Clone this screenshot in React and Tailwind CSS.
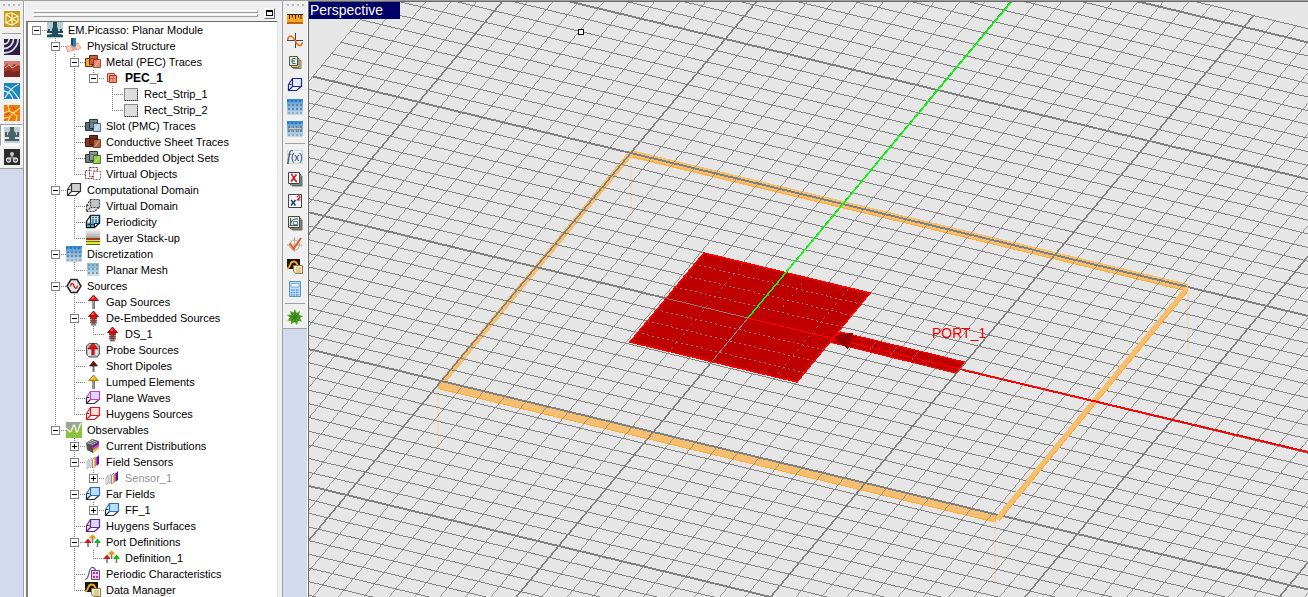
import { useState } from "react";

/* ---------- icons ---------- */

function Svg({ size = 16, children, crisp = false }) {
  return (
    <svg
      width={size}
      height={size}
      viewBox="0 0 16 16"
      className="block shrink-0"
      shapeRendering={crisp ? "crispEdges" : "auto"}
      fill="none"
      aria-hidden="true"
    >
      {children}
    </svg>
  );
}

const Cube = ({ front, back = front, fill = "#d8dcf0", dash, faces = "#fff" }) => (
  <Svg>
    <path d="M5.5 1.5 1.5 7.5V13.5H9.5L14.5 9V1.5Z" fill={faces} />
    <path d="M1.5 7.5V13.5H9.5L14 9.5M1.5 13.5 5.5 9.5M1.5 7.5H4.5" stroke={back} strokeWidth="1.2" strokeDasharray={dash} />
    <path d="M5.5 1.5H14.5V9.5H5.5Z" stroke={front} strokeWidth="1.2" fill={fill} strokeDasharray={dash} />
    <path d="M1.5 7.5 5.5 1.5" stroke={front} strokeWidth="1.2" strokeDasharray={dash} />
  </Svg>
);

const PeriodicCube = () => (
  <Svg>
    <path d="M5.5 1.5 1.5 7.5V13.5H9.5L14.5 9V1.5Z" fill="#fff" stroke="#111" strokeWidth="1.3" />
    <path d="M5.5 1.5H14.5V9.5H5.5Z" fill="#cfe4f0" stroke="#1c2a33" strokeWidth="1.2" />
    <path d="M7 3.5H14M7 6H14M7 8H14" stroke="#2c7cab" strokeWidth="1.5" strokeDasharray="2 1" />
    <path d="M2 8.5H9V13H2Z" fill="#5e9cc0" />
    <path d="M2.5 10.5H9M5.5 8V13" stroke="#14394e" />
    <path d="M9.5 13.5V9.5" stroke="#111" />
  </Svg>
);

const Stack = ({ a, b, c, line = "#333", dash }) => (
  <Svg>
    <path d="M.5 4.5H7.5V12.5H.5Z" fill={a} stroke={line} strokeDasharray={dash} />
    <path d="M4.5 1.5H12.5V10.5H4.5Z" fill={b} stroke={line} strokeDasharray={dash} />
    <path d="M5 4.5H12" stroke={line} opacity=".4" strokeDasharray={dash} />
    <path d="M8.5 5.5H15.5V13.5H8.5Z" fill={c} stroke={line} strokeOpacity=".7" strokeDasharray={dash} />
    <path d="M10 12.5 14.5 6.5" stroke="#fff" opacity=".5" />
  </Svg>
);

const Arrow = ({ head, edge, stem = "#777", bands }) => (
  <Svg>
    <path d="M7 6H10V15H7Z" fill={stem} />
    <path d="M8 6V15" stroke="#bbb" />
    <path d="M8.5 1 13.5 6.5H3.5Z" fill={head} stroke={edge} strokeWidth=".8" />
    <path d="M8.5 2 6 5H9Z" fill="#fff" opacity=".35" />
    {bands && (
      <>
        <path d="M5.5 6H11.5V9H5.5Z" fill={head} stroke={edge} strokeWidth=".6" />
        <path d="M5 10.2H12M5 12.8H12" stroke="#333" strokeWidth="1.1" />
        <path d="M5.5 11.5H11.5" stroke="#d33" strokeWidth="1.2" />
        <path d="M6 13.5H11V15.5H6Z" fill="#777" />
      </>
    )}
  </Svg>
);

const Picasso = () => (
  <Svg>
    <path d="M0 0H16V16H0Z" fill="#b9cdd1" />
    <path d="M6 0H10V5L11 7V9H13V7H15V9H16V11H11V12L16 13V15H0V13L5 12V11H0V9H1V7H3V9H5V7L6 5Z" fill="#1f4e5a" />
    <path d="M0 11.5H5M11 11.5H16" stroke="#fff" />
  </Svg>
);
const PicassoGray = () => (
  <Svg>
    <path d="M0 0H16V16H0Z" fill="#c3d0d0" />
    <path d="M6 0H10V4L12 6V8H13V5H15V10H11V12H15V14H1V12H5V10H1V5H3V8H4V6L6 4Z" fill="#48636a" />
    <path d="M0 11H5M11 11H16" stroke="#fff" />
  </Svg>
);
const Physical = () => (
  <Svg>
    <path d="M0 8 8 7 12 4 15 10 11 12 1 14Z" fill="#eba390" />
    <path d="M0 8 2 14 7 12 5 8ZM9 8 11 12 15 10 12 5Z" fill="#f8cfc2" stroke="#d88474" strokeWidth=".5" />
    <path d="M5 0H10V8L8 9 5 7Z" fill="#2f7fae" />
    <path d="M5 0H7V8L5 7Z" fill="#1f4960" />
  </Svg>
);
const Pec = () => (
  <Svg>
    <path d="M3.5 3.5H10.5V11.5H3.5Z" fill="#f6b49a" stroke="#c0452c" />
    <path d="M5.5 5.5H12.5V12.5H5.5Z" fill="#ee9a80" stroke="#b02a20" />
    <path d="M6 8.5H11M9 5V12" stroke="#c84634" opacity=".6" />
  </Svg>
);
const Swatch = () => (
  <Svg crisp>
    <path d="M1.5 2.5H14.5V14.5H1.5Z" fill="#dedede" stroke="#888" />
    <path d="M2 14.5H14.5V3" stroke="#333" strokeDasharray="1 1" />
  </Svg>
);
const Layers = () => (
  <Svg crisp>
    <defs>
      <linearGradient id="air" x2="0" y2="1">
        <stop stopColor="#f2f2f2" />
        <stop offset="1" stopColor="#a4a4a4" />
      </linearGradient>
    </defs>
    <path d="M1 0H15V8H1Z" fill="url(#air)" />
    <path d="M1 8H15V10H1Z" fill="#a43a22" />
    <path d="M1 10H15V15H1Z" fill="#f0e434" />
    <path d="M1 11.5H15M1 14.5H15" stroke="#4c6a1c" />
  </Svg>
);
const Mesh = ({ bar }) => (
  <Svg crisp>
    <defs>
      <linearGradient id="mesh" x2="0" y2="1">
        <stop stopColor="#2f86d0" />
        <stop offset=".25" stopColor="#68aae2" />
        <stop offset="1" stopColor="#c6dcee" />
      </linearGradient>
    </defs>
    <path d="M0 0H16V16H0Z" fill="url(#mesh)" />
    <path d="M0 2H16" stroke="#2060a0" strokeWidth="2" strokeDasharray="2 2" opacity=".6" />
    <path d="M1 6H16M1 10H16" stroke="#6a8092" strokeWidth="2" strokeDasharray="2 2" />
    <path d="M1 14H16" stroke="#a0a8b0" strokeWidth="2" strokeDasharray="2 2" />
    {bar && (
      <>
        <path d="M1 8H15M5 5V11M11 5V11" stroke="#8f979e" strokeWidth="2" />
        <path d="M2 7.5H14" stroke="#c4cace" />
      </>
    )}
  </Svg>
);
const MeshSmall = () => (
  <Svg crisp>
    <path d="M2 1H14V6H2Z" fill="#8bbcde" />
    <path d="M2 6H14V10H2Z" fill="#a9cde6" />
    <path d="M2 10H14V14H2Z" fill="#c9dde9" />
    <path d="M3 3H14M3 7H14M3 11H14" stroke="#8296a6" strokeWidth="2" strokeDasharray="2 2" />
  </Svg>
);
const SourceHex = () => (
  <Svg>
    <path d="M5 1.5H11L15 8 11 14.5H5L1 8Z" fill="#e6e6e6" stroke="#222" strokeWidth="1.5" />
    <path d="M4.5 8.5C5 4.5 7 4.5 8 8S11 11 11.5 7.5" stroke="#c01515" strokeWidth="1.3" />
  </Svg>
);
const Probe = () => (
  <Svg>
    <path d="M1.5 4 4 1.5H12L14.5 4V12L12 15H4L1.5 12Z" fill="#b8b8b8" stroke="#555" />
    <path d="M3 7H6V14H3ZM10.5 7H13V13H10.5Z" fill="#e4e4e4" />
    <path d="M8 1 13 7H3Z" fill="#e01818" stroke="#7a0000" strokeWidth=".6" />
    <path d="M6.5 7H9.5V13H6.5Z" fill="#c41414" />
  </Svg>
);
const Dipole = () => (
  <Svg>
    <path d="M7.5 8H9.5V14H7.5Z" fill="#777" />
    <path d="M8.5 3 12.5 8H4.5Z" fill="#6d1414" stroke="#300" strokeWidth=".6" />
  </Svg>
);
const Observ = () => (
  <Svg>
    <path d="M0 0H16V16H0Z" fill="#9aa596" />
    <path d="M0 16V8L4 11 7 5 11 10 16 2V16Z" fill="#86c440" />
    <path d="M0 6 4 10C6 10 6.500 3 8 3S9.500 10 11 10 13 2 15.500 1" stroke="#f6f4d0" strokeWidth="1.5" />
  </Svg>
);
const Currents = () => (
  <Svg>
    <path d="M1 5 7 1 14 3V10L8 15 2 12Z" fill="#555" />
    <path d="M2 5 7 1.5 13.5 3.5 8 7Z" fill="#d0d0d0" />
    <path d="M3.5 4 9 6M5.5 3 11 5M8 2 13 4" stroke="#333" strokeWidth=".8" />
    <path d="M8 7 14 3.5V7L8 11Z" fill="#5b22c8" />
    <path d="M8 9.5 14 6V8.5L8 13Z" fill="#e2438c" />
    <path d="M8 12 14 8.5V10L8 15Z" fill="#f7c22b" />
  </Svg>
);
const Sensors = () => (
  <Svg>
    <path d="M2 8 4 5V13L2 15ZM5 6.5 7 4V12L5 14Z" fill="#f4f4f4" stroke="#aaa" strokeWidth=".8" />
    <path d="M7.5 5.5 10 3V12L7.5 14Z" fill="#fff" stroke="#777" strokeWidth=".8" />
    <path d="M9 5 11 3V12L9 14Z" fill="#f5b43a" />
    <path d="M10.5 4 12 2.5V11L10.5 12.5Z" fill="#e0407c" />
    <path d="M12 3 14 1V10L12 11.5Z" fill="#3a18d8" />
  </Svg>
);
const Ports = () => (
  <Svg>
    <path d="M3 8V13M12.5 8V13" stroke="#777" strokeWidth="1.6" />
    <path d="M7.5 4V9" stroke="#777" strokeWidth="1.6" />
    <path d="M3 4.500 6 8V9H0V8Z" fill="#dc1414" />
    <path d="M7.5 0.500 10.500 3V4.500H4.500V3Z" fill="#e29a10" />
    <path d="M12.5 4.500 15.500 8V9H9.500V8Z" fill="#15b81c" />
  </Svg>
);
const Periodic = () => (
  <Svg>
    <path d="M0 13.500C5 12.500 3 2.500 7 1.500 10 1 10.500 4 11 6" stroke="#6a4aa8" strokeWidth="1.2" />
    <path d="M6.500 4.500H14.500V13.500H6.500Z" fill="#f3c8ee" stroke="#555" />
    <path d="M8 6H10V8H8ZM11 6H13V8H11ZM8 10H10V12H8ZM11 10H13V12H11Z" fill="#c424c0" />
  </Svg>
);
const DataMgr = () => (
  <Svg>
    <path d="M0 0H13V10H0Z" fill="#141414" />
    <path d="M0 9.500C4 9 2 2.500 6.500 2.500S9 6 12 8" stroke="#f6a81c" strokeWidth="1.8" />
    <path d="M6.500 6.500H15.500V14.500H8.500L6.500 12Z" fill="#f5e8bd" stroke="#8a7850" />
    <path d="M9 9H14M9 11H14M9 13H14" stroke="#b89d62" strokeWidth=".8" />
  </Svg>
);

/* toolbar icons */
const Ruler = () => (
  <Svg>
    <path d="M0 3H16V13H0Z" fill="#f7a62a" />
    <path d="M0 3.500H16" stroke="#3c2408" />
    <path d="M0 12H16" stroke="#b8680c" strokeWidth="2" />
    <path d="M2.500 4V8M5.500 4V6.500M8.500 4V8M11.500 4V6.500M14 4V8" stroke="#4a2703" />
  </Svg>
);
const Sine = () => (
  <Svg>
    <path d="M0 7.500H16M8.500 0V15" stroke="#444" />
    <path d="M.5 7C1.500 2 4.500 1 8 7.500S14.500 14 15.500 9" stroke="#f26a1b" strokeWidth="1.6" />
  </Svg>
);
const Sheets = ({ children, fill = "#fff" }) => (
  <Svg>
    <path d="M5 5H15.500V15.500H5Z" fill="#707070" />
    <path d="M3.500 3.500H14V14H3.500Z" fill="#aaa" stroke="#666" />
    <path d="M1.500 1.500H12.500V12.500H1.500Z" fill={fill} stroke="#444" />
    {children}
  </Svg>
);
const Eps = () => (
  <Svg>
    <path d="M6.5 5.5H14V13.5H6.5Z" fill="#e8cc7c" stroke="#777" />
    <path d="M4.5 3.5H12V12.5H4.5Z" fill="#d8cb84" stroke="#666" />
    <path d="M2.5 1.5H10.500V10.5H2.5Z" fill="#e6f0c4" stroke="#555" />
    <path d="M8.5 3.5H6Q4.500 4 5 6H8M5 6Q4.500 8 6 8.500H8.5" stroke="#285a8c" />
  </Svg>
);
const Fx = () => (
  <Svg>
    <path d="M.5 1.5H15.5V14.5H.5Z" stroke="#bbb" fill="#eef4fa" strokeDasharray="1 1" />
    <text x="0" y="12" fontSize="14" fontStyle="italic" fontFamily="Liberation Serif, serif" fill="#16365c">f</text>
    <text x="4" y="12" fontSize="10" fontFamily="Liberation Sans, sans-serif" fill="#16365c">(x)</text>
  </Svg>
);
const Chi = () => (
  <Sheets>
    <path d="M4 3.5C6 3 7 10.5 10 10.5M9.5 3.5 4 10.5" stroke="#d51a1a" strokeWidth="1.8" />
  </Sheets>
);
const XSquared = () => (
  <Svg>
    <path d="M1.5 1.5H14.5V14.5H1.5Z" fill="#f7f7f7" stroke="#444" />
    <path d="M4 7 8.5 12.5M8.5 7 4 12.5" stroke="#1c3f68" strokeWidth="1.5" />
    <path d="M10 4Q12.5 1.5 13 4L10.5 7H13.5" stroke="#cc1818" strokeWidth="1.2" />
  </Svg>
);
const Plots = () => (
  <Sheets fill="#eef0c8">
    <path d="M3.5 3V11M2.5 10.5H11" stroke="#555" />
    <path d="M3.5 10C4 5 6 3.5 11 4" stroke="#2a6db4" strokeWidth="1.2" />
    <path d="M6.5 6.5H10.5V9.5H6.5Z" stroke="#4e87bd" fill="#fff" />
  </Sheets>
);
const Check = () => (
  <Svg>
    <circle cx="7.5" cy="8" r="5" stroke="#aaa" />
    <path d="M7.5 0V15M0 8H15" stroke="#aaa" />
    <path d="M3 6.500 6.500 12 14 1" stroke="#ef5a17" strokeWidth="2" />
  </Svg>
);
const Calc = () => (
  <Svg>
    <path d="M2.5.5H13.5V15.5H2.5Z" fill="#bcdcf8" stroke="#5e93cc" />
    <path d="M4 2.5H12V6H4Z" fill="#f0f8ff" stroke="#6c9cd0" strokeWidth=".8" />
    <path d="M4 9H12M4 11.5H12M4 14H12" stroke="#6098d4" strokeWidth="1.5" strokeDasharray="1.5 1" />
  </Svg>
);
const Spark = () => (
  <Svg>
    <path
      d="M8 0 9.5 4 13 2 12 6 16 7 13 9 15 12.5 11 12 10 16 7.5 13 4 15.5 4 12 .5 11.5 3 8.5 0 6 4 5.5 3 2 6.5 3.5Z"
      fill="#4ea026"
    />
    <path d="M8 3V13M3 8H13M4.5 4.5 11.5 11.5M11.5 4.5 4.5 11.5" stroke="#2c7a14" strokeWidth=".9" />
  </Svg>
);
const Cubecad = () => (
  <Svg>
    <path d="M0 0H16V16H0Z" fill="#c79a1c" />
    <path d="M2 3 8 2 14 5V11L8 14 2 12ZM8 2V14M2 3 8 8 2 12M14 5 8 8 14 11" stroke="#fdf3c4" strokeWidth="1.2" />
  </Svg>
);
const Rings = () => (
  <Svg>
    <path d="M0 0H16V16H0Z" fill="#2a2140" />
    <path d="M0 5A5 5 0 0 0 5 0M0 9.5A9.5 9.5 0 0 0 9.5 0M0 14A14 14 0 0 0 14 0" stroke="#ddd6ea" strokeWidth="1.8" />
  </Svg>
);
const Terrain = () => (
  <Svg>
    <path d="M0 0H16V16H0Z" fill="#a33a2e" />
    <path d="M0 0H16V5L10 3 7 6 3 3 0 6Z" fill="#d08070" />
    <path d="M1 7 5 4 8 7 13 4" stroke="#e8b8a8" />
    <path d="M0 11 5 9 10 11 16 9V16H0Z" fill="#7c2420" />
  </Svg>
);
const Beams = () => (
  <Svg>
    <path d="M0 0H16V16H0Z" fill="#1e86bd" />
    <path d="M1 3Q8 5 15 16M1 15Q6 5 15 1M0 8Q7 9 9 16" stroke="#d8f0fb" strokeWidth="1.3" />
  </Svg>
);
const Cracks = () => (
  <Svg>
    <path d="M0 0H16V16H0Z" fill="#ee7a0c" />
    <path d="M0 8 5 6 9 8 12 6 16 3M5 6 4 0M9 8 6 12 4 16M9 8 13 11 12 16M6 12 0 13" stroke="#ffe08a" strokeWidth="1.2" />
    <path d="M2 10 5 8M9 2 11 5" stroke="#b23908" />
  </Svg>
);
const Spheres = () => (
  <Svg>
    <path d="M0 0H16V16H0Z" fill="#2c2c2c" />
    <path d="M8 4V8L4 11M8 8 12 11" stroke="#888" strokeWidth="2" />
    <circle cx="8" cy="5" r="2" fill="#ccc" />
    <circle cx="4.5" cy="11" r="2" stroke="#ddd" strokeWidth="1.300" />
    <circle cx="11.5" cy="11" r="2" stroke="#ddd" strokeWidth="1.300" />
  </Svg>
);

/* ---------- tree ---------- */

const stackMetal = <Stack a="#f4a92c" b="#c9603e" c="#f2876e" line="#6e2313" />;

const TREE = {
  label: "EM.Picasso: Planar Module",
  icon: <Picasso />,
  children: [
    {
      label: "Physical Structure",
      icon: <Physical />,
      children: [
        {
          label: "Metal (PEC) Traces",
          icon: stackMetal,
          children: [
            {
              label: "PEC_1",
              icon: <Pec />,
              bold: true,
              children: [
                { label: "Rect_Strip_1", icon: <Swatch /> },
                { label: "Rect_Strip_2", icon: <Swatch /> },
              ],
            },
          ],
        },
        { label: "Slot (PMC) Traces", icon: <Stack a="#596b77" b="#6f8794" c="#b4d6ec" line="#26333c" /> },
        { label: "Conductive Sheet Traces", icon: <Stack a="#8a3a20" b="#742c17" c="#b26238" line="#3c170b" /> },
        { label: "Embedded Object Sets", icon: <Stack a="#75848c" b="#8b9a9e" c="#9bd23c" line="#2e3a2e" /> },
        { label: "Virtual Objects", icon: <Stack a="#fff" b="#fbeeee" c="#fff" line="#6b3434" dash="2 1" /> },
      ],
    },
    {
      label: "Computational Domain",
      icon: <Cube front="#333" fill="#cfcfcf" />,
      children: [
        { label: "Virtual Domain", icon: <Cube front="#444" fill="#c4c4c4" dash="2 1" faces="#ddd" /> },
        { label: "Periodicity", icon: <PeriodicCube /> },
        { label: "Layer Stack-up", icon: <Layers /> },
      ],
    },
    {
      label: "Discretization",
      icon: <Mesh />,
      children: [{ label: "Planar Mesh", icon: <MeshSmall /> }],
    },
    {
      label: "Sources",
      icon: <SourceHex />,
      children: [
        { label: "Gap Sources", icon: <Arrow head="#e01818" edge="#7a0000" /> },
        {
          label: "De-Embedded Sources",
          icon: <Arrow head="#e01818" edge="#7a0000" bands />,
          children: [{ label: "DS_1", icon: <Arrow head="#e01818" edge="#7a0000" bands /> }],
        },
        { label: "Probe Sources", icon: <Probe /> },
        { label: "Short Dipoles", icon: <Dipole /> },
        { label: "Lumped Elements", icon: <Arrow head="#f0b418" edge="#a06c00" /> },
        { label: "Plane Waves", icon: <Cube front="#d638c4" back="#3c2d4a" /> },
        { label: "Huygens Sources", icon: <Cube front="#dc1c1c" fill="#fbdede" /> },
      ],
    },
    {
      label: "Observables",
      icon: <Observ />,
      children: [
        { label: "Current Distributions", icon: <Currents />, closed: true },
        {
          label: "Field Sensors",
          icon: <Sensors />,
          children: [{ label: "Sensor_1", icon: <Sensors />, closed: true, dim: true }],
        },
        {
          label: "Far Fields",
          icon: <Cube front="#2474c4" back="#1d2e44" fill="#c2dcf6" />,
          children: [{ label: "FF_1", icon: <Cube front="#2474c4" back="#1d2e44" fill="#c2dcf6" />, closed: true }],
        },
        { label: "Huygens Surfaces", icon: <Cube front="#6a1ea0" back="#5a1c88" /> },
        {
          label: "Port Definitions",
          icon: <Ports />,
          children: [{ label: "Definition_1", icon: <Ports /> }],
        },
        { label: "Periodic Characteristics", icon: <Periodic /> },
        { label: "Data Manager", icon: <DataMgr /> },
      ],
    },
  ],
};

function flatten(node, shut, guides = [], last = true, level = 0, out = []) {
  out.push({ node, guides, last, level });
  if (node.children && !shut[node.label]) {
    const next = level === 0 ? [false] : [...guides, !last];
    node.children.forEach((c, i) =>
      flatten(c, shut, next, i === node.children.length - 1, level + 1, out)
    );
  }
  return out;
}

function Guide({ through, half, branch }) {
  return (
    <svg width="19" height="16" className="block shrink-0" shapeRendering="crispEdges" aria-hidden="true">
      {through && <path d="M8.5 0V16" stroke="#808080" strokeDasharray="1 1" />}
      {half && <path d="M8.5 0V8" stroke="#808080" strokeDasharray="1 1" />}
      {branch && <path d="M8 8.5H19" stroke="#808080" strokeDasharray="1 1" />}
    </svg>
  );
}

function TreeRow({ row, shut, toggle }) {
  const { node, guides, last, level } = row;
  const expandable = node.children || node.closed;
  const open = node.children && !shut[node.label];
  return (
    <li role="treeitem" aria-level={level + 1} className="flex h-4 items-center whitespace-nowrap">
      {guides.map((g, i) => (
        <Guide key={i} through={g} />
      ))}
      <span className="relative block shrink-0">
        <Guide through={!last} half={last && level > 0} branch />
        {expandable && (
          <button
            type="button"
            aria-label={(open ? "Collapse " : "Expand ") + node.label}
            onClick={() => toggle(node.label)}
            className="absolute top-1 left-1 flex size-[9px] items-center justify-center border border-[#808080] bg-white"
          >
            <span className="block h-px w-[5px] bg-black" />
            {!open && <span className="absolute block h-[5px] w-px bg-black" />}
          </button>
        )}
      </span>
      {node.icon}
      <span
        className={
          "pl-[5px] leading-4 " +
          (node.bold ? "text-xs font-bold " : "text-[11px] ") +
          (node.dim ? "text-[#909090]" : "text-black")
        }
      >
        {node.label}
      </span>
    </li>
  );
}

function TreePanel() {
  const [shut, setShut] = useState({});
  const toggle = (k) => setShut((s) => ({ ...s, [k]: !s[k] }));
  return (
    <section className="flex w-[258px] shrink-0 flex-col border-l border-white bg-[#f0f0f0] pr-1 pl-px">
      <header className="flex h-5 shrink-0 items-center gap-1.5 pr-[3px] pl-[7px]">
        <div className="flex flex-1 flex-col gap-px pt-1">
          <div className="h-[3px] border border-t-white border-r-[#a0a0a0] border-b-[#a0a0a0] border-l-white" />
          <div className="h-[3px] border border-t-white border-r-[#a0a0a0] border-b-[#a0a0a0] border-l-white" />
        </div>
        <button
          type="button"
          aria-label="Dock panel"
          className="mt-1 flex size-[11px] items-center justify-center border border-t-white border-r-[#696969] border-b-[#696969] border-l-white bg-[#f0f0f0]"
        >
          <span className="block h-[6px] w-[7px] border border-t-2 border-black" />
        </button>
      </header>
      <div className="min-h-0 flex-1 overflow-y-auto border-t border-r border-l-2 border-t-[#696969] border-r-[#e3e3e3] border-l-[#808080] bg-white [scrollbar-width:none]">
        <ul role="tree" aria-label="Project tree">
          {flatten(TREE, shut).map((row) => (
            <TreeRow key={row.node.label} row={row} shut={shut} toggle={toggle} />
          ))}
        </ul>
      </div>
    </section>
  );
}

/* ---------- toolbars ---------- */

const LEFT = [
  ["CubeCAD", <Cubecad />],
  null,
  ["EM.Tempo", <Rings />],
  ["EM.Terrano", <Terrain />],
  ["EM.Illumina", <Beams />],
  ["EM.Ferma", <Cracks />],
  ["EM.Picasso", <PicassoGray />, true],
  ["EM.Libera", <Spheres />],
];

const RIGHT = [
  ["Units", <Ruler />],
  ["Frequency", <Sine />],
  ["Materials", <Eps />],
  ["Domain", <Cube front="#1a2a9c" fill="#e8ecfa" faces="#f4f6ff" />],
  ["Mesh", <Mesh />],
  ["Mesh settings", <Mesh bar />],
  null,
  ["Functions", <Fx />],
  ["Variables", <Chi />],
  ["Expressions", <XSquared />],
  ["Plots", <Plots />],
  ["Validate", <Check />],
  ["Data manager", <DataMgr />],
  ["Calculator", <Calc />],
  null,
  ["Run", <Spark />],
];

function Toolbar({ items, label, className }) {
  return (
    <nav aria-label={label} className={"flex shrink-0 flex-col bg-[#d3daed] " + className}>
      <div className="flex flex-col items-stretch border-b border-[#a0a0a0] bg-[#f0f0f0]">
        <div className="flex h-[7px] items-center justify-center gap-[3px] pt-px">
          {[0, 1, 2, 3].map((i) => (
            <span key={i} className="block size-0.5 bg-[#b8b8b8]" />
          ))}
        </div>
        {items.map((it, i) =>
          it ? (
            <button
              key={it[0]}
              type="button"
              aria-label={it[0]}
              aria-pressed={!!it[2]}
              className={
                "flex h-[22px] items-center justify-center " +
                (it[2] ? "border border-[#a0a0a0] border-r-white border-b-white bg-[#f8f8f8]" : "")
              }
            >
              {it[1]}
            </button>
          ) : (
            <div key={i} className="flex h-1.5 items-center px-0.5">
              <span className="block h-px flex-1 bg-[#a0a0a0]" />
            </div>
          )
        )}
      </div>
    </nav>
  );
}

/* ---------- 3D view ---------- */

const O = [748, 318];
const U = [21.2, 5.1];
const V = [9.47, -11.4];
const at = (i, j) => `${O[0] + i * U[0] + j * V[0]} ${O[1] + i * U[1] + j * V[1]}`;
const span = (a, b) => Array.from({ length: b - a + 1 }, (_, k) => a + k);
const MIN_I = -25;
const MAX_I = 90;
const MIN_J = -60;
const MAX_J = 31;
const PATCH = "M704 253 870 293 797 382 630 342Z";
const STRIP = "M840 332 964 362 956 373 830 342Z";

function Scene() {
  return (
    <svg className="block h-full w-full" shapeRendering="crispEdges" fill="none" role="img" aria-label="Patch antenna model">
      <g transform="translate(-309 -2)">
        <path d="M631 150 1188 284V291L628 157Z" fill="#f4bf70" />
        <path d="M629 151 634 154 443 386 438 383Z" fill="#f4bf70" />
        <path d="M438 381 996 514V522L438 389Z" fill="#f4bf70" />
        <path d="M633 157 1187 291M440 389 995 522" stroke="#ffac38" />
        <path d="M631 158V218M438 389V447M995 522V583M1188 291V351" stroke="#ecdcc8" strokeWidth="2" />

        {span(MIN_J, MAX_J).map((j) => (
          <path key={"j" + j} d={`M${at(MIN_I, j)}L${at(MAX_I, j)}`} stroke="#808080" strokeWidth={j % 10 === 0 ? 1.94 : 0.97} />
        ))}
        {span(MIN_I, MAX_I).map((i) => (
          <path key={"i" + i} d={`M${at(i, MIN_J)}L${at(i, MAX_J)}`} stroke="#808080" strokeWidth={i % 10 === 0 ? 1.54 : 0.77} />
        ))}

        <path d="M1183 289 1188 286V291L1000 520 994 519Z" fill="#f4bf70" />
        <path d="M1188 291 999 521M995 515V521" stroke="#ffac38" />

        <clipPath id="patch">
          <path d={PATCH} />
        </clipPath>
        <path d={PATCH} fill="#be0000" />
        <g clipPath="url(#patch)" stroke="#8c8080">
          {span(-6, 6).map((j) => (
            <path key={j} d={`M${at(-8, j)}L${at(8, j)}`} strokeWidth="0.97" strokeDasharray={j === 0 ? "none" : "2 3"} />
          ))}
          <path d={`M${at(-2, -6)}L${at(-2, 6)}M${at(3, -6)}L${at(3, 6)}`} strokeWidth="0.77" strokeDasharray="2 4" />
          <path d={`M${at(1, 1)}L${at(1, 4)}`} strokeDasharray="1 6" />
          <path d={`M${at(0, 0)}L${at(0, -6)}`} />
        </g>
        <path d={PATCH} stroke="#ff0000" strokeWidth="1.5" />

        <path d={STRIP} fill="#be0000" stroke="#ff0000" strokeWidth="1.3" />
        <path d="M748 318 964 370" stroke="#ff0000" strokeWidth="0.97" />
        <path d="M876 342 869 351M897 347 890 356M918 352 911 361" stroke="#8c8080" strokeWidth="0.77" strokeDasharray="2 2" />
        <path d="M833 337 844 334 853 333 850 343 848 350 844 346Z" fill="#960000" />
        <path d="M963 370 1308 452 3400 955" stroke="#ff0000" strokeWidth="1.94" />
        <path d="M748 318 1012 1" stroke="#00ff00" strokeWidth="1.54" />

        <path d="M578.5 29.5H583.5V34.5H578.5Z" fill="#f8f8f8" stroke="#000" />
        <text x="932" y="338" fontSize="14" fontFamily="Liberation Sans, Arial, sans-serif" fill="#f00000">
          PORT_1
        </text>
      </g>
    </svg>
  );
}

export default function App() {
  return (
    <div className="flex h-screen overflow-hidden border-t border-[#a0a0a0] bg-[#f0f0f0] font-['Liberation_Sans',Arial,sans-serif]">
      <Toolbar items={LEFT} label="Modules" className="w-6 border-r border-[#a0a0a0]" />
      <TreePanel />
      <Toolbar items={RIGHT} label="Tools" className="w-[26px] border-x border-l-[#a0a0a0] border-r-white" />
      <main className="relative min-w-0 flex-1 overflow-hidden border-t border-l border-[#696969] bg-[#e6e6e6]">
        <Scene />
        <h1 className="absolute top-0 left-0 h-[17px] w-[91px] bg-[#000068] pl-px text-sm leading-4 text-white">
          Perspective
        </h1>
      </main>
    </div>
  );
}
